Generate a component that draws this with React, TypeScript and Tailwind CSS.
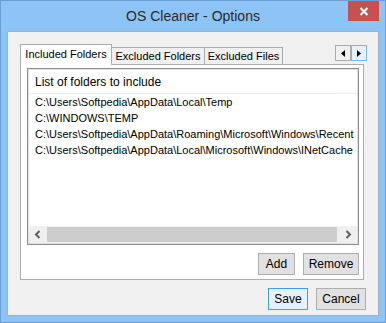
const FOLDERS = [
  "C:\\Users\\Softpedia\\AppData\\Local\\Temp",
  "C:\\WINDOWS\\TEMP",
  "C:\\Users\\Softpedia\\AppData\\Roaming\\Microsoft\\Windows\\Recent",
  "C:\\Users\\Softpedia\\AppData\\Local\\Microsoft\\Windows\\INetCache",
];

const FONT = "font-['Liberation_Sans',Arial,sans-serif]";

function Button({ label, width, focused }: { label: string; width: string; focused?: boolean }) {
  return (
    <button
      className={`${width} h-[22px] border text-[12px] text-black leading-none ${
        focused ? "border-[#3c9cf0] bg-[#e5f1fb]" : "border-[#adadad] bg-[#e1e1e1]"
      }`}
    >
      {label}
    </button>
  );
}

function Chevron({ dir }: { dir: "left" | "right" }) {
  return (
    <svg width="7" height="9" viewBox="0 0 7 9" aria-hidden>
      <path
        d={dir === "left" ? "M5.5 1 L2 4.5 L5.5 8" : "M1.5 1 L5 4.5 L1.5 8"}
        fill="none"
        stroke="#606060"
        strokeWidth="2"
      />
    </svg>
  );
}

export default function App() {
  return (
    <div className={`${FONT} w-[386px] h-[323px] bg-[#8dc3f5] border border-[#6b9fd4] flex flex-col`}>
      {/* title bar */}
      <div className="h-[30px] flex items-start shrink-0">
        <div className="w-[37px]" />
        <div className="flex-1 text-center text-[14px] text-[#2a2a2a] pt-[6px] leading-[18px]">
          OS Cleaner - Options
        </div>
        <div className="w-[31px] h-[20px] mr-[6px] bg-[#c75050] flex items-center justify-center">
          <svg width="10" height="9" viewBox="0 0 10 9" aria-hidden>
            <path d="M1.5 1 L8.5 8 M8.5 1 L1.5 8" stroke="#fff" strokeWidth="2" />
          </svg>
        </div>
      </div>

      {/* client area */}
      <div className="flex-1 mx-[6px] mb-[6px] border border-[#9db3cb] bg-[#f0f0f0] pt-[12px] pl-[12px] pr-[12px] flex flex-col">
        {/* tab strip */}
        <div className="h-[20px] flex items-end w-[345px] relative z-10">
          <div className="w-[92px] h-[21px] -mb-px border border-b-0 border-[#acacac] bg-white text-[11px] text-black flex items-center justify-center pb-[1px]">
            Included Folders
          </div>
          <div className="w-[93px] h-[17px] border border-l-0 border-b-0 border-[#acacac] bg-[#f0f0f0] text-[11px] text-black flex items-center justify-center">
            Excluded Folders
          </div>
          <div className="w-[78px] h-[17px] border border-l-0 border-b-0 border-[#acacac] bg-[#f0f0f0] text-[11px] text-black flex items-center justify-center">
            Excluded Files
          </div>
          <div className="ml-auto -mr-[2px] self-start mt-[1px] flex">
            <div className="w-[16px] h-[16px] border border-[#acacac] bg-[#f0f0f0] flex items-center justify-center">
              <svg width="4" height="7" viewBox="0 0 4 7" aria-hidden>
                <path d="M4 0 L0 3.5 L4 7 Z" fill="#000" />
              </svg>
            </div>
            <div className="w-[16px] h-[16px] border border-[#7eb4ea] bg-[#e5f1fb] flex items-center justify-center">
              <svg width="4" height="7" viewBox="0 0 4 7" aria-hidden>
                <path d="M0 0 L4 3.5 L0 7 Z" fill="#000" />
              </svg>
            </div>
          </div>
        </div>

        {/* tab page */}
        <div className="w-[344px] h-[216px] border border-[#acacac] bg-white pt-[3px] pl-[6px] flex flex-col">
          <div className="w-[332px] h-[177px] border border-[#8f8f8f] flex flex-col">
            <div className="flex-1 border border-[#e0e0e0] flex flex-col">
              <div className="h-[24px] border-b border-[#e5eef8] pl-[6px] flex items-center text-[12px] text-black">
                List of folders to include
              </div>
              <div className="flex-1 pl-[6px] overflow-hidden">
                {FOLDERS.map((f) => (
                  <div key={f} className="h-[16px] leading-[16px] text-[11px] text-black whitespace-nowrap">
                    {f}
                  </div>
                ))}
              </div>
              {/* horizontal scrollbar */}
              <div className="h-[17px] bg-[#f0f0f0] flex items-center">
                <div className="w-[17px] h-[17px] flex items-center justify-center">
                  <Chevron dir="left" />
                </div>
                <div className="flex-1 h-[15px] ml-[1px] mr-[3px] bg-[#cdcdcd]" />
                <div className="w-[17px] h-[17px] flex items-center justify-center">
                  <Chevron dir="right" />
                </div>
              </div>
            </div>
          </div>
          <div className="w-[332px] mt-[8px] flex justify-end gap-[8px]">
            <Button label="Add" width="w-[37px]" />
            <Button label="Remove" width="w-[56px]" />
          </div>
        </div>

        {/* dialog buttons */}
        <div className="mt-[8px] flex justify-end gap-[8px]">
          <Button label="Save" width="w-[40px]" focused />
          <Button label="Cancel" width="w-[50px]" />
        </div>
      </div>
    </div>
  );
}
